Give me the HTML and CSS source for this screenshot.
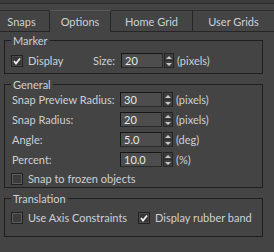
FILE: index.html
```html
<!DOCTYPE html>
<html lang="en">
<head>
    <meta charset="UTF-8">
    <title>Grid and Snap Settings</title>
    <link rel="stylesheet" href="styles.css">
</head>
<body>
    <div class="top-strip"></div>

    <div class="tabs">
        <div class="tab tab-first">Snaps</div>
        <div class="tab active">Options</div>
        <div class="tab">Home Grid</div>
        <div class="tab tab-last">User Grids</div>
    </div>

    <div class="panel">
        <fieldset class="group marker">
            <legend>Marker</legend>
            <div class="row">
                <label class="check display-check"><span class="box on"><svg viewBox="0 0 10 10"><polyline points="2,5 4,7.5 8,2.5"/></svg></span>Display</label>
                <span class="size-label">Size:</span>
                <span class="field">20</span>
                <span class="spin"><i class="up"></i><i class="down"></i></span>
                <span class="unit">(pixels)</span>
            </div>
        </fieldset>

        <fieldset class="group general">
            <legend>General</legend>
            <div class="row">
                <span class="label">Snap Preview Radius:</span>
                <span class="field">30</span>
                <span class="spin"><i class="up"></i><i class="down"></i></span>
                <span class="unit">(pixels)</span>
            </div>
            <div class="row">
                <span class="label">Snap Radius:</span>
                <span class="field">20</span>
                <span class="spin"><i class="up"></i><i class="down"></i></span>
                <span class="unit">(pixels)</span>
            </div>
            <div class="row">
                <span class="label">Angle:</span>
                <span class="field">5.0</span>
                <span class="spin"><i class="up"></i><i class="down"></i></span>
                <span class="unit">(deg)</span>
            </div>
            <div class="row">
                <span class="label">Percent:</span>
                <span class="field">10.0</span>
                <span class="spin"><i class="up"></i><i class="down"></i></span>
                <span class="unit">(%)</span>
            </div>
            <div class="row check-row">
                <label class="check"><span class="box"></span>Snap to frozen objects</label>
            </div>
        </fieldset>

        <fieldset class="group translation">
            <legend>Translation</legend>
            <div class="row check-row">
                <label class="check axis-check"><span class="box"></span>Use Axis Constraints</label>
                <label class="check"><span class="box on"><svg viewBox="0 0 10 10"><polyline points="2,5 4,7.5 8,2.5"/></svg></span>Display rubber band</label>
            </div>
        </fieldset>
    </div>
</body>
</html>
```

FILE: styles.css
```css
* {
    box-sizing: border-box;
}

body {
    margin: 0;
    background: #444444;
    color: #ccd0d6;
    font-family: Lato, 'Liberation Sans', sans-serif;
    font-size: 11px;
    line-height: 13px;
}

.top-strip {
    height: 4px;
    background: #3c3c3c;
    border-bottom: 1px solid #2c2c2c;
}

/* tab bar */
.tabs {
    display: flex;
    margin-top: 6px;
    height: 22px;
}

.tab {
    display: flex;
    align-items: center;
    justify-content: center;
    border-top: 1px solid #2e2e2e;
    border-right: 1px solid #262626;
    border-bottom: 1px solid #262626;
}

.tab-first {
    width: 50px;
    padding-right: 6px;
}

.tab.active {
    width: 61px;
    border-bottom-color: #444444;
    border-top-color: #5a5a5a;
}

.tab:nth-child(3) {
    width: 82px;
}

.tab-last {
    flex: 1;
    border-right: none;
}

/* groups */
.panel {
    padding-left: 4px;
}

.group {
    width: 259px;
    margin: 2px 0 0;
    padding: 0 6px;
    border: 1px solid #1e1e1e;
    min-width: 0;
}

.group + .group {
    margin-top: 4px;
}

.group legend {
    padding: 0 2px;
    height: 13px;
    line-height: 13px;
}

.marker {
    padding-top: 6px;
    padding-bottom: 5px;
}

.general {
    padding-top: 1px;
    padding-bottom: 2px;
    display: flex;
    flex-direction: column;
    gap: 5px;
}

.translation {
    padding-top: 6px;
    padding-bottom: 12px;
}

.row {
    display: flex;
    align-items: center;
    height: 15px;
}

.check-row {
    height: 13px;
}

.label {
    width: 109px;
    padding-left: 1px;
}

.size-label {
    width: 28px;
}

.field {
    width: 42px;
    height: 15px;
    padding-left: 3px;
    background: #4d4d4d;
    border-top: 1px solid #161616;
    border-left: 1px solid #161616;
    border-right: 1px solid #2a2a2a;
    border-bottom: 1px solid #2a2a2a;
    color: #e6e8ea;
    line-height: 13px;
}

.spin {
    display: flex;
    flex-direction: column;
    width: 10px;
    height: 15px;
    margin-left: 1px;
    border: 1px solid #262626;
    background: #3e3e3e;
}

.spin i {
    flex: 1;
    display: flex;
    align-items: center;
    justify-content: center;
}

.spin .up {
    border-bottom: 1px solid #2c2c2c;
}

.spin i::before {
    content: '';
    border-left: 3px solid transparent;
    border-right: 3px solid transparent;
}

.spin .up::before {
    border-bottom: 3px solid #c8c8c8;
}

.spin .down::before {
    border-top: 3px solid #c8c8c8;
}

.unit {
    margin-left: 3px;
}

/* checkboxes */
.check {
    display: flex;
    align-items: center;
    gap: 5px;
}

.display-check {
    width: 82px;
}

.axis-check {
    width: 127px;
}

.box {
    width: 12px;
    height: 12px;
    border: 1px solid #222222;
    box-shadow: inset 0 0 0 1px #5c5c5c;
    background: #3c3c3c;
    display: flex;
    align-items: center;
    justify-content: center;
}

.box.on {
    box-shadow: inset 0 0 0 1px #4a4a4a;
    background: #363636;
}

.box svg {
    width: 10px;
    height: 10px;
}

.box polyline {
    fill: none;
    stroke: #f2f2f2;
    stroke-width: 1.8;
}
```
